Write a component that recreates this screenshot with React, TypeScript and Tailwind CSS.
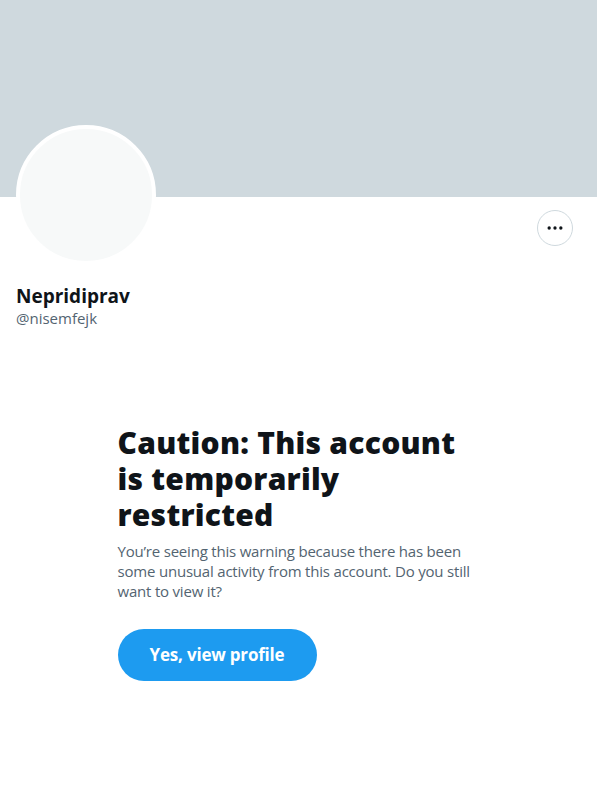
export default function App() {
  return (
    <div
      className="min-h-[807px] w-full bg-white text-[#0f1419]"
      style={{ fontFamily: '"Open Sans", "Noto Sans", Roboto, sans-serif' }}
    >
      <div className="h-[197px] bg-[#cfd9de]" />
      <div className="px-4">
        <div className="flex items-start justify-between">
          <div className="-mt-[72px] h-[140px] w-[140px] rounded-full border-4 border-white bg-[#f7f9f9]" />
          <button className="mt-[13px] mr-[8px] flex h-[36px] w-[36px] items-center justify-center rounded-full border border-[#cfd9de] bg-white">
            <svg viewBox="0 0 24 24" className="h-[20px] w-[20px]" fill="#0f1419">
              <circle cx="5" cy="12" r="2" />
              <circle cx="12" cy="12" r="2" />
              <circle cx="19" cy="12" r="2" />
            </svg>
          </button>
        </div>
        <div className="mt-[19px] text-[19px] font-bold leading-6">Nepridiprav</div>
        <div className="text-[15px] leading-5 text-[#536471]">@nisemfejk</div>
      </div>
      <div className="mt-[97px] flex justify-center">
        <div className="w-[362px]">
          <h1 className="max-w-[350px] text-[30px] font-extrabold leading-9 tracking-[0.25px]">
            Caution: This account is temporarily restricted
          </h1>
          <p className="mt-2 text-[15px] leading-5 tracking-[-0.2px] text-[#536471]">
            You’re seeing this warning because there has been some unusual activity from this account. Do you still want to view it?
          </p>
          <button className="mt-7 h-[52px] w-[199px] rounded-full bg-[#1d9bf0] text-[17px] font-bold tracking-[-0.2px] text-white">
            Yes, view profile
          </button>
        </div>
      </div>
    </div>
  );
}
